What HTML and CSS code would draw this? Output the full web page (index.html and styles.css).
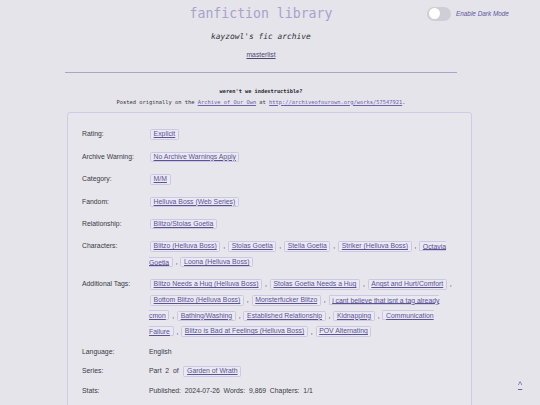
FILE: index.html
```html
<!DOCTYPE html>
<html lang="en">
<head>
<meta charset="utf-8">
<title>fanfiction library</title>
<link rel="stylesheet" href="styles.css">
</head>
<body>
<div class="toggle">
  <span class="switch"><span class="knob"></span></span>
  <span class="toggle-label">Enable Dark Mode</span>
</div>
<main class="page">
  <header class="head">
    <h1 class="site-title">fanfiction library</h1>
    <p class="site-sub">kayzowl's fic archive</p>
    <nav class="nav"><a href="#">masterlist</a></nav>
    <hr class="rule">
    <h2 class="work-title">weren't we indestructible?</h2>
    <p class="posted">Posted originally on the <a href="#">Archive of Our Own</a> at <a href="#">http://archiveofourown.org/works/57547921</a>.</p>
  </header>
  <section class="meta">
    <div class="row"><div class="label">Rating:</div><div class="value"><a class="tag" href="#">Explicit</a></div></div>
    <div class="row"><div class="label">Archive Warning:</div><div class="value"><a class="tag" href="#">No Archive Warnings Apply</a></div></div>
    <div class="row"><div class="label">Category:</div><div class="value"><a class="tag" href="#">M/M</a></div></div>
    <div class="row"><div class="label">Fandom:</div><div class="value"><a class="tag" href="#">Helluva Boss (Web Series)</a></div></div>
    <div class="row"><div class="label">Relationship:</div><div class="value"><a class="tag" href="#">Blitzo/Stolas Goetia</a></div></div>
    <div class="row"><div class="label">Characters:</div><div class="value"><a class="tag" href="#">Blitzo (Helluva Boss)</a> , <a class="tag" href="#">Stolas Goetia</a> , <a class="tag" href="#">Stella Goetia</a> , <a class="tag" href="#">Striker (Helluva Boss)</a> , <a class="tagi" href="#">Octavia Goetia</a> , <a class="tag" href="#">Loona (Helluva Boss)</a></div></div>
    <div class="row"><div class="label">Additional Tags:</div><div class="value"><a class="tag" href="#">Blitzo Needs a Hug (Helluva Boss)</a> , <a class="tag" href="#">Stolas Goetia Needs a Hug</a> , <a class="tag" href="#">Angst and Hurt/Comfort</a> , <a class="tag" href="#">Bottom Blitzo (Helluva Boss)</a> , <a class="tag" href="#">Monsterfucker Blitzo</a> , <a class="tagi" href="#">i cant believe that isnt a tag already cmon</a> , <a class="tag" href="#">Bathing/Washing</a> , <a class="tag" href="#">Established Relationship</a> , <a class="tag" href="#">Kidnapping</a> , <a class="tagi" href="#">Communication Failure</a> , <a class="tag" href="#">Blitzo is Bad at Feelings (Helluva Boss)</a> , <a class="tag" href="#">POV Alternating</a></div></div>
    <div class="row plain"><div class="label">Language:</div><div class="value">English</div></div>
    <div class="row plain"><div class="label">Series:</div><div class="value">Part&nbsp; 2&nbsp; of&nbsp; <a class="tag" href="#">Garden of Wrath</a></div></div>
    <div class="row plain"><div class="label">Stats:</div><div class="value">Published:&nbsp; 2024-07-26&nbsp; Words:&nbsp; 9,869&nbsp; Chapters:&nbsp; 1/1</div></div>
  </section>
</main>
<a class="to-top" href="#">^</a>
</body>
</html>
```
FILE: styles.css
```css
html, body {
  margin: 0;
  padding: 0;
  background: #e5e4eb;
}
body {
  font-family: "Liberation Sans", Arial, sans-serif;
  color: #3a3a3f;
}
.page {
  margin-left: 65px;
  padding-top: 6px;
}
.head {
  width: 392px;
  text-align: center;
}
.site-title {
  margin: 0;
  font-family: "DejaVu Sans Mono", monospace;
  font-weight: normal;
  font-size: 13.2px;
  line-height: 16px;
  color: #a7a1cb;
}
.site-sub {
  margin: 10px 0 0;
  font-family: "DejaVu Sans Mono", monospace;
  font-style: italic;
  font-size: 7.9px;
  line-height: 10px;
  color: #2f2f33;
}
.nav {
  margin-top: 8px;
  font-size: 6.8px;
  line-height: 10px;
}
.nav a {
  color: #4d4870;
}
.rule {
  margin: 12px 0 0;
  border: 0;
  border-top: 1px solid #aaa4cc;
  height: 0;
}
.work-title {
  margin: 12.5px 0 0;
  font-family: "DejaVu Sans Mono", monospace;
  font-weight: bold;
  font-size: 5.3px;
  line-height: 10px;
  color: #2a2a2e;
}
.posted {
  margin: 1px 0 0;
  font-family: "DejaVu Sans Mono", monospace;
  font-size: 5.4px;
  line-height: 10px;
  color: #333;
}
.posted a {
  color: #6b61ad;
}
.meta {
  margin-top: 5.5px;
  margin-left: 2px;
  width: 405px;
  box-sizing: border-box;
  border: 1px solid #cfcbe5;
  border-radius: 3px;
  background: #e7e6ed;
  padding: 13.4px 19px 30px 14px;
  display: flex;
  flex-direction: column;
  gap: 6.7px;
}
.row {
  display: grid;
  grid-template-columns: 67px 1fr;
  font-size: 6.85px;
  line-height: 15.7px;
}
.row.plain {
  line-height: 12.8px;
}
.label {
  color: #3a3a3f;
}
.value {
  color: #3a3a3f;
}
.tag {
  display: inline-block;
  line-height: 8.5px;
  padding: 0 2.6px;
  margin: 0 1px;
  border: 1px solid #ccc8e3;
  border-radius: 1.5px;
  background: #eae9f1;
  color: #5b5296;
  vertical-align: middle;
}
.tagi {
  line-height: 8.5px;
  padding: 0.5px 2.6px;
  margin: 0 1px;
  border: 1px solid #ccc8e3;
  border-radius: 1.5px;
  background: #eae9f1;
  color: #5b5296;
}
.toggle {
  position: absolute;
  top: 7px;
  left: 427px;
  display: flex;
  align-items: center;
  gap: 5px;
}
.switch {
  position: relative;
  width: 24px;
  height: 13.5px;
  border-radius: 7px;
  background: #cfcdd6;
}
.knob {
  position: absolute;
  top: 1.25px;
  left: 1.5px;
  width: 11px;
  height: 11px;
  border-radius: 50%;
  background: #ffffff;
}
.toggle-label {
  font-style: italic;
  font-size: 6.4px;
  color: #5d559a;
}
.to-top {
  position: fixed;
  top: 380px;
  left: 518px;
  font-size: 9px;
  line-height: 10px;
  color: #6a62a8;
}
```
